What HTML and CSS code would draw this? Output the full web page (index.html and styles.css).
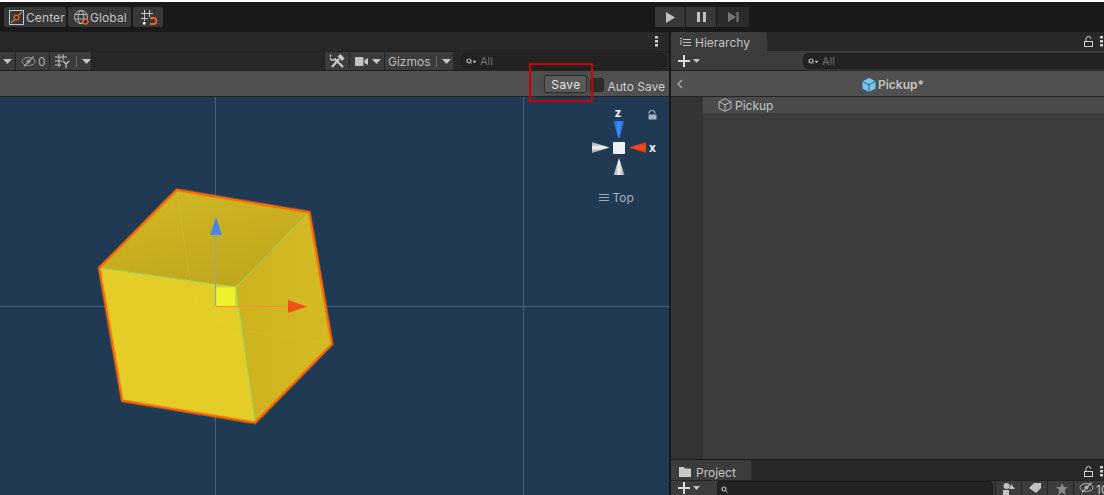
FILE: index.html
```html
<!DOCTYPE html>
<html lang="en">
<head>
<meta charset="utf-8">
<title>Unity Editor - Pickup prefab</title>
<link rel="stylesheet" href="styles.css">
</head>
<body>
<div class="app">
  <div class="white-strip"></div>
  <header class="toolbar">
    <div class="tool-left">
      <button class="tbtn tbtn-center">
        <svg class="ico" width="15" height="15" viewBox="0 0 15 15"><rect x=".5" y=".5" width="14" height="14" fill="none" stroke="#c4c4c4"/><path d="M2 13 L13 2" stroke="#c4c4c4"/><circle cx="7.500" cy="7.500" r="2.400" fill="#383838" stroke="#f0602a" stroke-width="1.300"/></svg>
        <span>Center</span>
      </button>
      <button class="tbtn tbtn-global">
        <svg class="ico" width="15" height="15" viewBox="0 0 15 15"><circle cx="7" cy="7" r="6.500" fill="none" stroke="#b8b8b8"/><ellipse cx="7" cy="7" rx="2.800" ry="6.500" fill="none" stroke="#b8b8b8"/><path d="M1 4.500h12M1 9h12" stroke="#b8b8b8"/><circle cx="11.500" cy="11.500" r="2.500" fill="#383838" stroke="#f0602a" stroke-width="1.300"/></svg>
        <span>Global</span>
      </button>
      <button class="tbtn tbtn-snap">
        <svg class="ico" width="16" height="15" viewBox="0 0 16 15"><path d="M3.500 0v11M8.500 0v7M0 3.500h12M0 8.500h7" stroke="#c4c4c4" fill="none"/><rect x="2" y="12" width="2.500" height="2.500" fill="#fff"/><path d="M9 8h3.500a3 3 0 0 1 0 6H9" fill="none" stroke="#f0602a" stroke-width="2"/></svg>
      </button>
    </div>
    <div class="play-group">
      <button class="pbtn"><svg width="9" height="11" viewBox="0 0 9 11"><path d="M0 0 L9 5.500 L0 11Z" fill="#c2c2c2"/></svg></button>
      <button class="pbtn"><svg width="9" height="10" viewBox="0 0 9 10"><path d="M0 0h3v10H0zM6 0h3v10H6z" fill="#c2c2c2"/></svg></button>
      <button class="pbtn pbtn-off"><svg width="11" height="10" viewBox="0 0 11 10"><path d="M0 0 L8 5 L0 10Z M8.500 0h2v10h-2z" fill="#777"/></svg></button>
    </div>
  </header>
  <div class="main">
    <section class="left">
      <div class="tabstrip tabstrip-left">
        <svg class="kebab" width="3" height="11" viewBox="0 0 3 11"><path d="M0 0h3v2.500H0zM0 4h3v2.500H0zM0 8h3v2.500H0z" fill="#d0d0d0"/></svg>
      </div>
      <div class="scene-tools">
        <div class="seg seg-arrow"><svg width="9" height="5" viewBox="0 0 9 5"><path d="M0 0h9L4.500 5z" fill="#c4c4c4"/></svg></div>
        <div class="seg seg-vis">
          <svg width="15" height="11" viewBox="0 0 15 11"><ellipse cx="7.500" cy="5.500" rx="6.500" ry="4" fill="none" stroke="#999"/><circle cx="7.500" cy="5.500" r="2" fill="#999"/><path d="M3 10.500 L12.500 .5" stroke="#999" stroke-width="1.200"/></svg>
          <span>0</span>
        </div>
        <div class="seg seg-grid">
          <svg width="15" height="14" viewBox="0 0 15 14"><path d="M4 0v13M8 0v6M0 3h12M0 7h7M0 11h6" stroke="#c4c4c4" fill="none"/><path d="M8 7l3 3 3-3M11 10v4" stroke="#c4c4c4" fill="none" stroke-width="1.300"/></svg>
          <i class="seg-sep"></i>
          <svg width="9" height="5" viewBox="0 0 9 5"><path d="M0 0h9L4.500 5z" fill="#c4c4c4"/></svg>
        </div>
        <div class="spacer"></div>
        <div class="seg seg-tools">
          <svg width="15" height="14" viewBox="0 0 15 14"><path d="M2 13L9 5" stroke="#c8c8c8" stroke-width="2.200" fill="none"/><path d="M7.500 2.500L10.500 0L14.500 4.500L12 7Z" fill="#c8c8c8"/><path d="M4.500 4.500L13 13" stroke="#c8c8c8" stroke-width="2.200" fill="none"/><path d="M1 .8A3 3 0 1 0 5.200 5" fill="none" stroke="#c8c8c8" stroke-width="1.600"/></svg>
        </div>
        <div class="seg seg-cam">
          <svg width="13" height="9" viewBox="0 0 13 9"><rect width="8.500" height="9" rx="1" fill="#c4c4c4"/><path d="M9.500 3 L13 1v7L9.500 6z" fill="#c4c4c4"/></svg>
          <svg width="9" height="5" viewBox="0 0 9 5"><path d="M0 0h9L4.500 5z" fill="#c4c4c4"/></svg>
        </div>
        <div class="seg seg-gizmos">
          <span>Gizmos</span>
          <i class="seg-sep"></i>
          <svg width="9" height="5" viewBox="0 0 9 5"><path d="M0 0h9L4.500 5z" fill="#c4c4c4"/></svg>
        </div>
        <div class="search search-scene">
          <svg width="10" height="7" viewBox="0 0 10 7"><circle cx="3" cy="3" r="2" fill="none" stroke="#c0c0c0" stroke-width="1.200"/><path d="M4.500 4.500L6 6M7 3h3L8.500 5z" stroke="#c0c0c0" fill="#c0c0c0" stroke-width=".5"/></svg>
          <span>All</span>
        </div>
      </div>
      <div class="prefab-bar">
        <button class="save-btn">Save</button>
        <span class="autosave-box"></span>
        <span class="autosave-label">Auto Save</span>
        <div class="red-mark"></div>
      </div>
      <div class="scene">
        <svg class="scene-svg" width="669" height="398" viewBox="0 97 669 398">
          <defs>
            <linearGradient id="topFace" x1="0" y1="0" x2="0.500" y2="1">
              <stop offset="0" stop-color="#d2b924"/>
              <stop offset="1" stop-color="#c1a71d"/>
            </linearGradient>
            <linearGradient id="rightFace" x1="0" y1="0" x2="1" y2="0">
              <stop offset="0" stop-color="#cdb21e"/>
              <stop offset="1" stop-color="#d4bb24"/>
            </linearGradient>
            <linearGradient id="coneH" x1="0" y1="0" x2="1" y2="0">
              <stop offset="0" stop-color="#8f979e"/>
              <stop offset=".5" stop-color="#f4f4f4"/>
              <stop offset="1" stop-color="#8f979e"/>
            </linearGradient>
            <linearGradient id="coneV" x1="0" y1="0" x2="0" y2="1">
              <stop offset="0" stop-color="#8f979e"/>
              <stop offset=".5" stop-color="#f4f4f4"/>
              <stop offset="1" stop-color="#8f979e"/>
            </linearGradient>
            <linearGradient id="coneBlue" x1="0" y1="0" x2="1" y2="0">
              <stop offset="0" stop-color="#1f5fc0"/>
              <stop offset=".5" stop-color="#3c8cff"/>
              <stop offset="1" stop-color="#1f5fc0"/>
            </linearGradient>
            <linearGradient id="coneRed" x1="0" y1="0" x2="0" y2="1">
              <stop offset="0" stop-color="#c8341a"/>
              <stop offset=".5" stop-color="#fa4a1e"/>
              <stop offset="1" stop-color="#c8341a"/>
            </linearGradient>
          </defs>
          <path d="M215.500 97V495M0 306.500H669M523.500 97V495" stroke="#4a6075" fill="none"/>
          <path d="M99.300 268 L235.700 287.300 L255 422.700 L122.300 400.700Z" fill="#e5cd28"/>
          <path d="M176.700 190 L309.300 212.300 L235.700 287.300 L99.300 268Z" fill="url(#topFace)"/>
          <path d="M309.300 212.300 L332 344 L255 422.700 L235.700 287.300Z" fill="url(#rightFace)"/>
          <path d="M176.700 190 L196.700 323 M196.700 323 L122.300 400.700 M196.700 323 L332 344" stroke="#d6c63c" stroke-opacity=".28" fill="none"/>
          <path d="M99.300 268 L235.700 287.300 L309.300 212.300 M235.700 287.300 L255 422.700" stroke="#9be06a" stroke-width="1" fill="none"/>
          <path d="M176.700 190 L309.300 212.300 L332 344 L255 422.700 L122.300 400.700 L99.300 268Z" fill="none" stroke="#f97a1e" stroke-opacity=".45" stroke-width="3.500" stroke-linejoin="round"/>
          <path d="M176.700 190 L309.300 212.300 L332 344 L255 422.700 L122.300 400.700 L99.300 268Z" fill="none" stroke="#ff6a00" stroke-width="1.800" stroke-linejoin="round"/>
          <rect x="216" y="287" width="19.500" height="19.500" fill="#f0f02c" stroke="#b8e040" stroke-width=".8"/>
          <path d="M215.500 306V230" stroke="#8ea8b0"/>
          <path d="M216 217 L222 235 H210Z" fill="#4a86e8"/>
          <path d="M216 306.500H290" stroke="#ff8a30"/>
          <path d="M288 300 L307 306.500 L288 313Z" fill="#f4501a"/>
          <path d="M613.300 121 H624.300 L619.300 138 H618.300Z" fill="url(#coneBlue)"/>
          <path d="M619 158 L624.500 175 H613.500Z" fill="url(#coneH)"/>
          <path d="M592 142 L609.500 147.500 L592 153Z" fill="url(#coneV)"/>
          <path d="M646 142 V153 L629 147.500Z" fill="url(#coneRed)"/>
          <rect x="613" y="142" width="12" height="12" fill="#eef0f2"/>
          <text class="axis" x="614.500" y="116.500">z</text>
          <text class="axis" x="649" y="151.500">x</text>
          <path d="M649 113.500a3 3 0 0 1 6 0" fill="none" stroke="#aab2ba" stroke-width="1.200"/>
          <rect x="648.500" y="114.500" width="8" height="5" fill="#aab2ba"/>
          <path d="M599 194.500h10M599 197.500h10M599 200.500h10" stroke="#9cabb8"/>
          <text class="top-label" x="612.500" y="201.500">Top</text>
        </svg>
      </div>
    </section>
    <div class="divider"></div>
    <section class="right">
      <div class="hier">
        <div class="tabstrip">
          <div class="tab tab-hier">
            <svg width="11" height="9" viewBox="0 0 11 9"><path d="M0 .5h2M3 1.500h8M3 4.500h8M3 7.500h8M1 2v5" stroke="#c4c4c4" fill="none"/></svg>
            <span>Hierarchy</span>
          </div>
          <div class="tab-icons">
            <svg width="9" height="11" viewBox="0 0 9 11"><path d="M2 5V3a2.500 2.500 0 0 1 5 0" fill="none" stroke="#d0d0d0"/><rect x=".5" y="5.500" width="8" height="5" fill="none" stroke="#d0d0d0"/></svg>
            <svg width="3" height="11" viewBox="0 0 3 11"><path d="M0 0h3v2.500H0zM0 4h3v2.500H0zM0 8h3v2.500H0z" fill="#d0d0d0"/></svg>
          </div>
        </div>
        <div class="hier-tools">
          <div class="plus">
            <svg width="12" height="12" viewBox="0 0 12 12"><path d="M6 0v12M0 6h12" stroke="#dadada" stroke-width="2"/></svg>
            <svg width="7" height="4" viewBox="0 0 7 4"><path d="M0 0h7L3.500 4z" fill="#c4c4c4"/></svg>
          </div>
          <div class="search search-hier">
            <svg width="10" height="7" viewBox="0 0 10 7"><circle cx="3" cy="3" r="2" fill="none" stroke="#c0c0c0" stroke-width="1.200"/><path d="M4.500 4.500L6 6M7 3h3L8.500 5z" stroke="#c0c0c0" fill="#c0c0c0" stroke-width=".5"/></svg>
            <span>All</span>
          </div>
        </div>
        <div class="hier-prefab">
          <svg class="back" width="6" height="10" viewBox="0 0 6 10"><path d="M5 1L1 5l4 4" fill="none" stroke="#a8a8a8" stroke-width="1.500"/></svg>
          <div class="prefab-title">
            <svg width="14" height="14" viewBox="0 0 14 14"><path d="M7 0L13.500 3.300V10.500L7 14L.5 10.500V3.300Z" fill="#73c5f2"/><path d="M.5 3.300L7 6.800L13.500 3.300M7 6.800V14" stroke="#3c5a6c" fill="none"/></svg>
            <span>Pickup*</span>
          </div>
        </div>
        <div class="hier-body">
          <div class="gutter"></div>
          <div class="rows">
            <div class="row">
              <svg width="14" height="14" viewBox="0 0 14 14"><path d="M7 .7L13 3.700V10.300L7 13.300L1 10.300V3.700Z M1 3.700L7 6.900L13 3.700M7 6.900V13.300" fill="none" stroke="#bdbdbd"/></svg>
              <span>Pickup</span>
            </div>
          </div>
        </div>
      </div>
      <div class="project">
        <div class="tabstrip tabstrip-project">
          <div class="tab tab-project">
            <svg width="12" height="10" viewBox="0 0 12 10"><path d="M0 0h5l1 1.500h6V10H0z" fill="#c8c8c8"/></svg>
            <span>Project</span>
          </div>
          <div class="tab-icons">
            <svg width="9" height="11" viewBox="0 0 9 11"><path d="M2 5V3a2.500 2.500 0 0 1 5 0" fill="none" stroke="#d0d0d0"/><rect x=".5" y="5.500" width="8" height="5" fill="none" stroke="#d0d0d0"/></svg>
            <svg width="3" height="11" viewBox="0 0 3 11"><path d="M0 0h3v2.500H0zM0 4h3v2.500H0zM0 8h3v2.500H0z" fill="#d0d0d0"/></svg>
          </div>
        </div>
        <div class="project-tools">
          <div class="plus plus-project">
            <svg width="12" height="12" viewBox="0 0 12 12"><path d="M6 0v12M0 6h12" stroke="#dadada" stroke-width="2"/></svg>
            <svg width="7" height="4" viewBox="0 0 7 4"><path d="M0 0h7L3.500 4z" fill="#c4c4c4"/></svg>
          </div>
          <div class="search search-project">
            <svg width="7" height="7" viewBox="0 0 7 7"><circle cx="3" cy="3" r="2" fill="none" stroke="#c0c0c0" stroke-width="1.200"/><path d="M4.500 4.500L6.500 6.500" stroke="#c0c0c0"/></svg>
          </div>
          <div class="pseg pseg-type">
            <svg width="12" height="12" viewBox="0 0 12 12"><circle cx="3.500" cy="3" r="3" fill="#c4c4c4"/><path d="M8 1l4 5H6zM0 7h6v5H0z" fill="#c4c4c4"/></svg>
          </div>
          <div class="pseg pseg-label">
            <svg width="12" height="10" viewBox="0 0 12 10"><path d="M0 5L5 0h7v5L7 10z" fill="#c4c4c4"/></svg>
          </div>
          <div class="pseg pseg-star">
            <svg width="12" height="12" viewBox="0 0 12 12"><path d="M6 0l1.800 4H12L8.800 7l1 5L6 9.500 2.200 12l1-5L0 4h4.200z" fill="#8a8a8a"/></svg>
          </div>
          <div class="pseg pseg-vis">
            <svg width="15" height="11" viewBox="0 0 15 11"><ellipse cx="7.500" cy="5.500" rx="6.500" ry="4" fill="none" stroke="#b0b0b0"/><circle cx="7.500" cy="5.500" r="2" fill="#b0b0b0"/><path d="M3 10.500 L12.500 .5" stroke="#b0b0b0" stroke-width="1.200"/></svg>
            <span>10</span>
          </div>
        </div>
      </div>
    </section>
  </div>
</div>
</body>
</html>
```

FILE: styles.css
```css
* { box-sizing: border-box; }
html, body { margin: 0; padding: 0; width: 1104px; height: 495px; overflow: hidden; background: #191919; }
body { font-family: Inter, "Liberation Sans", sans-serif; font-size: 12px; color: #c4c4c4; }
button { font: inherit; color: inherit; border: 0; padding: 0; margin: 0; }
svg { display: block; flex: none; }

.app { display: flex; flex-direction: column; width: 1104px; height: 495px; }
.white-strip { height: 2px; background: #fff; flex: none; }

.toolbar { height: 30px; flex: none; background: #191919; display: flex; align-items: flex-start; padding: 5px 0 0 4px; position: relative; }
.tool-left { display: flex; gap: 2px; }
.tbtn { height: 20px; background: #383838; border-radius: 2px; display: flex; align-items: center; gap: 2px; padding-left: 5px; letter-spacing: .1px; }
.tbtn-center { width: 62px; }
.tbtn-global { width: 63px; padding-left: 6px; gap: 1px; }
.tbtn-snap { width: 30px; margin-left: 0; padding-left: 8px; }
.play-group { display: flex; gap: 1px; margin-left: 492px; }
.pbtn { width: 30px; height: 20px; background: #383838; display: flex; align-items: center; justify-content: center; }
.pbtn-off { width: 32px; background: #2b2b2b; }

.main { flex: 1; display: flex; min-height: 0; }
.left { width: 669px; flex: none; display: flex; flex-direction: column; }
.divider { width: 2px; flex: none; background: #191919; }
.right { flex: 1; display: flex; flex-direction: column; min-width: 0; }

.tabstrip { height: 19px; flex: none; background: #282828; display: flex; align-items: center; justify-content: space-between; }
.tabstrip-left { justify-content: flex-end; padding-right: 11px; }
.kebab { margin-top: -1px; }

.scene-tools { height: 20px; flex: none; background: #282828; border-top: 1px solid #1f1f1f; border-bottom: 1px solid #1f1f1f; display: flex; align-items: stretch; }
.seg { background: #3c3c3c; display: flex; align-items: center; border-right: 1px solid #232323; }
.seg-arrow { width: 16px; padding-left: 3px; }
.seg-vis { width: 34px; padding-left: 5px; gap: 2px; color: #a8a8a8; }
.seg-grid { width: 42px; padding-left: 5px; }
.seg-sep { width: 1px; height: 11px; background: #6a6a6a; margin: 0 5px 0 6px; flex: none; }
.spacer { flex: 1; }
.seg-tools { width: 26px; padding-left: 5px; border-left: 1px solid #232323; }
.seg-cam { width: 35px; padding-left: 5px; gap: 4px; }
.seg-gizmos { width: 68px; padding-left: 3px; border-right: 0; color: #bdbdbd; }
.seg-gizmos .seg-sep { margin: 0 5px; }

.search { background: #232323; border: 1px solid #1a1a1a; border-radius: 6px; height: 16px; display: flex; align-items: center; padding-left: 4px; gap: 4px; color: #707070; font-size: 11px; }
.search-scene { width: 205px; margin: 1px 3px 0 8px; }

.prefab-bar { height: 26px; flex: none; background: #505050; border-bottom: 1px solid #232323; display: flex; align-items: center; justify-content: flex-end; padding-right: 4px; position: relative; }
.save-btn { width: 43px; height: 18px; background: #5a5a5a; border: 1px solid #2e2e2e; border-radius: 3px; color: #e2e2e2; letter-spacing: .4px; margin-right: 3px; margin-top: 1px; box-shadow: 0 0 10px rgba(0,0,0,.18); }
.autosave-box { width: 14px; height: 14px; background: #2d2d2d; border: 1px solid #262626; border-radius: 2px; margin-right: 3px; margin-top: 2px; }
.autosave-label { color: #cfcfcf; margin-top: 6px; }
.red-mark { position: absolute; left: 529px; top: -8px; width: 64px; height: 39px; border: 2px solid #c00; }

.scene { flex: 1; background: #213a54; min-height: 0; }
.scene-svg { width: 669px; height: 398px; }
.axis { font: 700 12px Inter, "Liberation Sans", sans-serif; fill: #f2f2f2; }
.top-label { font: 12px Inter, "Liberation Sans", sans-serif; fill: #a3b0bc; }

.tab { height: 19px; background: #3c3c3c; display: flex; align-items: center; border-radius: 2px 2px 0 0; }
.tab-hier { width: 96px; padding: 2px 0 0 9px; gap: 4px; }
.tab-project { width: 80px; padding: 4px 0 0 8px; gap: 5px; height: 20px; }
.tab-icons { display: flex; align-items: center; gap: 7px; padding-right: 1px; }

.hier { flex: 1; display: flex; flex-direction: column; min-height: 0; }
.hier-tools { height: 20px; flex: none; background: #3c3c3c; border-bottom: 1px solid #232323; display: flex; align-items: center; }
.plus { display: flex; align-items: center; gap: 3px; margin-left: 7px; width: 125px; flex: none; }
.search-hier { flex: 1; border-right: 0; border-radius: 6px 0 0 6px; margin-top: 1px; }
.hier-prefab { height: 26px; flex: none; background: #505050; border-bottom: 1px solid #232323; display: flex; align-items: center; position: relative; justify-content: center; padding: 2px 0 0 11px; }
.back { position: absolute; left: 6px; top: 8px; }
.prefab-title { display: flex; align-items: center; gap: 2px; font-weight: 600; color: #c4c4c4; }
.hier-body { flex: 1; display: flex; background: #3c3c3c; min-height: 0; }
.gutter { width: 32px; flex: none; background: #343434; }
.rows { flex: 1; }
.row { height: 16px; background: #4b4b4b; display: flex; align-items: center; padding-left: 15px; gap: 3px; color: #c4c4c4; }

.project { height: 36px; flex: none; background: #282828; border-top: 1px solid #191919; }
.tabstrip-project { height: 20px; align-items: flex-start; background: #282828; }
.tabstrip-project .tab-icons { margin-top: 6px; }
.project-tools { height: 15px; display: flex; background: #3c3c3c; align-items: flex-start; border-top: 1px solid #232323; }
.plus-project { width: 39px; margin-left: 7px; padding-top: 1px; }
.search-project { width: 276px; height: 14px; padding-top: 1px; border-radius: 4px 4px 0 0; border-bottom: 0; flex: none; padding-left: 3px; margin-right: 2px; }
.pseg { width: 26px; height: 14px; flex: none; display: flex; padding: 2px 0 0 7px; border-left: 1px solid #232323; }
.pseg-label { padding-left: 7px; }
.pseg-star { padding-left: 8px; }
.pseg-vis { width: 40px; gap: 2px; padding: 1px 0 0 5px; }
```
